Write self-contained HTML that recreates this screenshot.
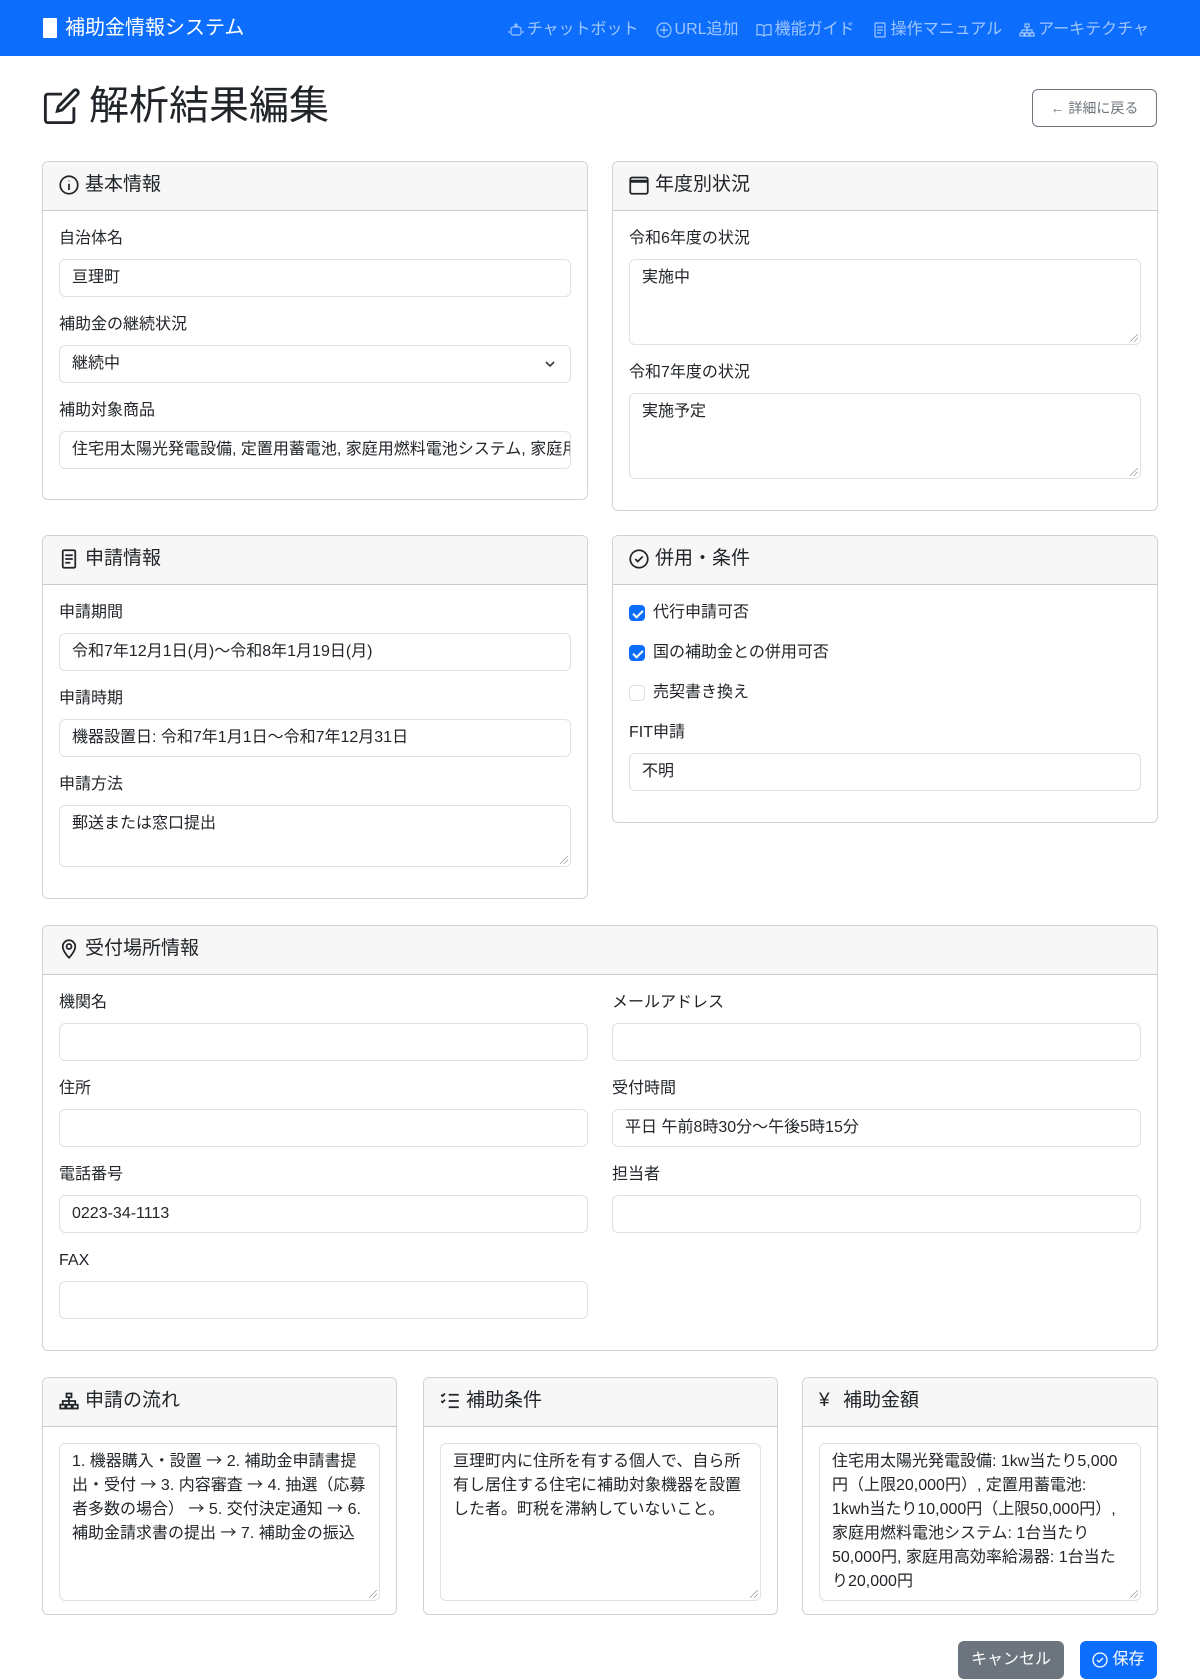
<!DOCTYPE html>
<html><head><meta charset="utf-8">
<style>
*{box-sizing:border-box;margin:0;padding:0}
body{width:1200px;height:1678px;overflow:hidden;background:#fff;color:#212529;font-family:"Liberation Sans","Noto Sans CJK JP",sans-serif;font-size:16px;line-height:24px;position:relative}
.nav{position:absolute;left:0;top:0;width:1200px;height:56px;background:#0d6efd}
.brand{position:absolute;left:43px;top:14px;color:#fff;font-size:20px;line-height:28px;display:flex;align-items:center;gap:8px}
.brand i{display:inline-block;width:14px;height:20px;background:#fff;border-radius:1px}
.links{position:absolute;right:51px;top:18px;display:flex;gap:17px;color:rgba(255,255,255,.6);font-size:16px}
.links span{display:flex;align-items:center;gap:3px}
.links svg{width:16px;height:16px;stroke:rgba(255,255,255,.6);fill:none;stroke-width:1.2}
h1{position:absolute;left:43px;top:82px;font-size:40px;line-height:48px;font-weight:400;display:flex;align-items:center;gap:8px}
.back{position:absolute;left:1032px;top:89px;width:125px;height:38px;border:1px solid #6c757d;border-radius:6px;color:#6c757d;font-size:14px;display:flex;align-items:center;justify-content:center}
.card{position:absolute;border:1px solid rgba(0,0,0,.175);border-radius:6px;overflow:hidden}
.ch{height:49px;background:#f7f7f7;border-bottom:1px solid rgba(0,0,0,.175);padding:0 16px 3px;display:flex;align-items:center;font-size:19px;gap:6px}
.ch svg{width:20px;height:20px;fill:none;stroke:#212529;stroke-width:1.4}
.cb{padding:16px}
label{display:block;margin-bottom:8px;height:24px}
.fc{display:block;width:100%;height:38px;border:1px solid #dee2e6;border-radius:6px;padding:6px 12px;margin-bottom:16px;white-space:nowrap;overflow:hidden;position:relative;background:#fff}
.ta{white-space:normal}
.ta:after{content:"";position:absolute;right:2px;bottom:2px;width:8px;height:8px;background:linear-gradient(135deg,transparent 45%,#999 45%,#999 52%,transparent 52%,transparent 70%,#999 70%,#999 77%,transparent 77%)}
.chk{height:24px;margin-bottom:16px;display:flex;align-items:center;gap:8px}
.box{width:16px;height:16px;border-radius:4px;border:1px solid #dee2e6}
.on{background:#0d6efd;border-color:#0d6efd;position:relative}
.on:after{content:"";position:absolute;left:5px;top:2px;width:4px;height:8px;border:solid #fff;border-width:0 2px 2px 0;transform:rotate(45deg)}
.row{display:flex;gap:24px}
.row>div{flex:1}
.ar{font-family:"Noto Sans CJK JP",sans-serif;line-height:1}
.btn{position:absolute;top:1641px;height:38px;border-radius:6px;color:#fff;display:flex;align-items:center;justify-content:center;font-size:16px;gap:4px}
</style></head><body>
<div class="nav">
<div class="brand"><i></i>補助金情報システム</div>
<div class="links">
<span><svg viewBox="0 0 16 16"><rect x="3" y="5" width="10" height="8" rx="2"/><circle cx="8" cy="3" r="1"/><path d="M6 9h.1M10 9h.1M1 9v2M15 9v2"/></svg>チャットボット</span>
<span><svg viewBox="0 0 16 16"><circle cx="8" cy="8" r="7"/><path d="M8 4v8M4 8h8"/></svg>URL追加</span>
<span><svg viewBox="0 0 16 16"><path d="M1 3c3-1 5 0 7 1 2-1 4-2 7-1v10c-3-1-5 0-7 1-2-1-4-2-7-1zM8 4v10"/></svg>機能ガイド</span>
<span><svg viewBox="0 0 16 16"><rect x="3" y="1" width="10" height="14" rx="1"/><path d="M5 5h6M5 8h6M5 11h4"/></svg>操作マニュアル</span>
<span><svg viewBox="0 0 16 16"><rect x="6" y="2" width="4" height="3"/><rect x="1" y="11" width="4" height="3"/><rect x="6" y="11" width="4" height="3"/><rect x="11" y="11" width="4" height="3"/><path d="M8 5v6M3 11V8h10v3"/></svg>アーキテクチャ</span>
</div></div>
<h1><svg width="38" height="38" viewBox="0 0 16 16" fill="none" stroke="#212529" stroke-width="1.2"><path d="M14.5 1.5l0 0a1.2 1.2 0 0 1 0 1.7L8 9.7 6 10.2l.5-2L13 1.5a1.1 1.1 0 0 1 1.5 0zM13 8.5V14a1 1 0 0 1-1 1H2a1 1 0 0 1-1-1V4a1 1 0 0 1 1-1h6"/></svg>解析結果編集</h1>
<div class="back">← 詳細に戻る</div>

<div class="card" style="left:42px;top:161px;width:546px;height:339px">
<div class="ch"><svg viewBox="0 0 16 16"><circle cx="8" cy="8" r="7"/><path d="M8 7v5M8 4.5v.5"/></svg>基本情報</div>
<div class="cb">
<label>自治体名</label><div class="fc">亘理町</div>
<label>補助金の継続状況</label><div class="fc">継続中<svg style="position:absolute;right:14px;top:13px" width="12" height="10" viewBox="0 0 12 10" fill="none" stroke="#343a40" stroke-width="1.6"><path d="M2 3l4 4 4-4"/></svg></div>
<label>補助対象商品</label><div class="fc">住宅用太陽光発電設備, 定置用蓄電池, 家庭用燃料電池システム, 家庭用高効率給湯器</div>
</div></div>

<div class="card" style="left:612px;top:161px;width:546px;height:350px">
<div class="ch"><svg viewBox="0 0 16 16"><rect x="1" y="2" width="14" height="13" rx="1.5"/><path d="M1 5h14" stroke-width="2.4"/></svg>年度別状況</div>
<div class="cb">
<label>令和6年度の状況</label><div class="fc ta" style="height:86px">実施中</div>
<label>令和7年度の状況</label><div class="fc ta" style="height:86px">実施予定</div>
</div></div>

<div class="card" style="left:42px;top:535px;width:546px;height:364px">
<div class="ch"><svg viewBox="0 0 16 16"><rect x="3" y="1" width="10" height="14" rx="1"/><path d="M5 5h6M5 8h6M5 11h4"/></svg>申請情報</div>
<div class="cb">
<label>申請期間</label><div class="fc">令和7年12月1日(月)〜令和8年1月19日(月)</div>
<label>申請時期</label><div class="fc">機器設置日: 令和7年1月1日〜令和7年12月31日</div>
<label>申請方法</label><div class="fc ta" style="height:62px">郵送または窓口提出</div>
</div></div>

<div class="card" style="left:612px;top:535px;width:546px;height:288px">
<div class="ch"><svg viewBox="0 0 16 16"><circle cx="8" cy="8" r="7"/><path d="M5 8l2 2 4-4"/></svg>併用・条件</div>
<div class="cb">
<div class="chk"><div class="box on"></div>代行申請可否</div>
<div class="chk"><div class="box on"></div>国の補助金との併用可否</div>
<div class="chk"><div class="box"></div>売契書き換え</div>
<label>FIT申請</label><div class="fc">不明</div>
</div></div>

<div class="card" style="left:42px;top:925px;width:1116px;height:426px">
<div class="ch"><svg viewBox="0 0 16 16"><path d="M8 15s5-5 5-9A5 5 0 0 0 3 6c0 4 5 9 5 9z"/><circle cx="8" cy="6" r="2"/></svg>受付場所情報</div>
<div class="cb"><div class="row">
<div><label>機関名</label><div class="fc"></div><label>住所</label><div class="fc"></div><label>電話番号</label><div class="fc">0223-34-1113</div><label>FAX</label><div class="fc"></div></div>
<div><label>メールアドレス</label><div class="fc"></div><label>受付時間</label><div class="fc">平日 午前8時30分〜午後5時15分</div><label>担当者</label><div class="fc"></div></div>
</div></div></div>

<div class="card" style="left:42px;top:1377px;width:355px;height:238px">
<div class="ch"><svg viewBox="0 0 16 16"><rect x="6" y="2" width="4" height="3"/><rect x="1" y="11" width="4" height="3"/><rect x="6" y="11" width="4" height="3"/><rect x="11" y="11" width="4" height="3"/><path d="M8 5v6M3 11V8h10v3"/></svg>申請の流れ</div>
<div class="cb"><div class="fc ta" style="height:158px">1. 機器購入・設置 <span class="ar">→</span> 2. 補助金申請書提出・受付 <span class="ar">→</span> 3. 内容審査 <span class="ar">→</span> 4. 抽選（応募者多数の場合） <span class="ar">→</span> 5. 交付決定通知 <span class="ar">→</span> 6. 補助金請求書の提出 <span class="ar">→</span> 7. 補助金の振込</div></div></div>

<div class="card" style="left:423px;top:1377px;width:355px;height:238px">
<div class="ch"><svg viewBox="0 0 16 16"><path d="M7 3h8M7 8h8M7 13h8M1 3l1 1 2-2M1 8l1 1 2-2M2 13h.1"/></svg>補助条件</div>
<div class="cb"><div class="fc ta" style="height:158px">亘理町内に住所を有する個人で、自ら所有し居住する住宅に補助対象機器を設置した者。町税を滞納していないこと。</div></div></div>

<div class="card" style="left:802px;top:1377px;width:356px;height:238px">
<div class="ch"><span style="width:18px">¥</span>補助金額</div>
<div class="cb"><div class="fc ta" style="height:158px">住宅用太陽光発電設備: 1kw当たり5,000円（上限20,000円）, 定置用蓄電池: 1kwh当たり10,000円（上限50,000円）, 家庭用燃料電池システム: 1台当たり50,000円, 家庭用高効率給湯器: 1台当たり20,000円</div></div></div>

<div class="btn" style="left:958px;width:106px;background:#6c757d">キャンセル</div>
<div class="btn" style="left:1080px;width:77px;background:#0d6efd"><svg width="16" height="16" viewBox="0 0 16 16" fill="none" stroke="#fff" stroke-width="1.3"><circle cx="8" cy="8" r="7"/><path d="M5 8l2 2 4-4"/></svg>保存</div>
</body></html>
